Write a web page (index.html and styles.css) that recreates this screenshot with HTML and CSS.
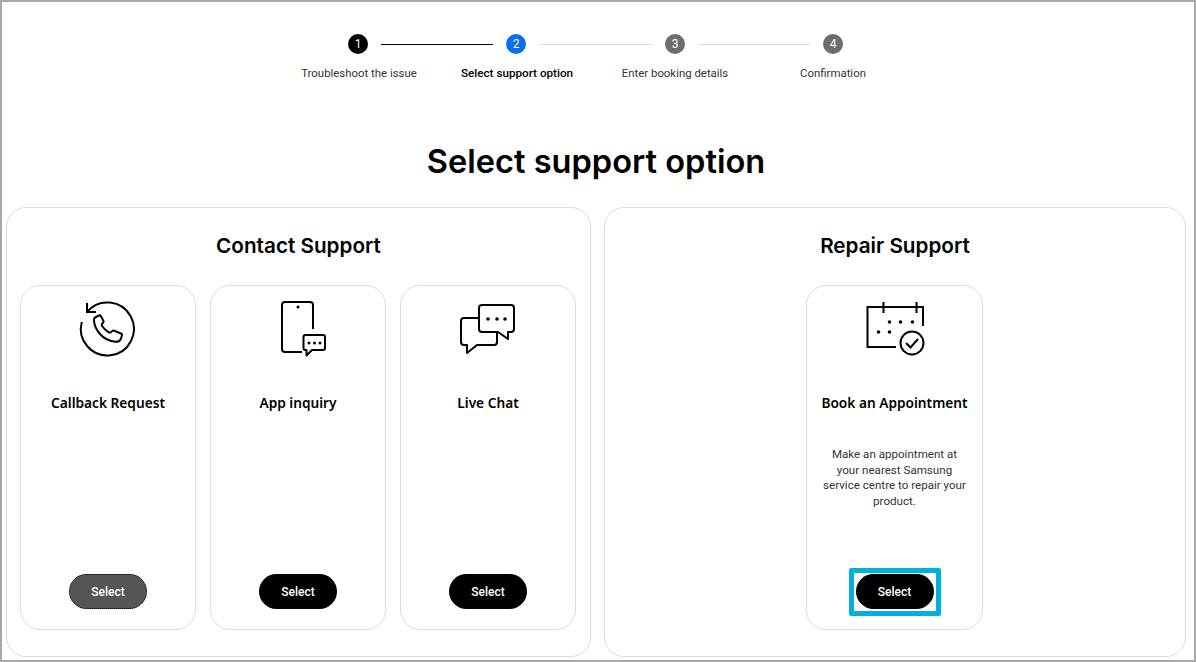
FILE: index.html
```html
<!DOCTYPE html>
<html lang="en">
<head>
    <meta charset="UTF-8">
    <meta name="viewport" content="width=device-width, initial-scale=1.0">
    <title>Select support option</title>
    <link rel="stylesheet" href="styles.css">
</head>
<body>

<div class="frame">
    <div class="stepper">
        <span class="dot done">1</span>
        <span class="line done"></span>
        <span class="dot active">2</span>
        <span class="line second"></span>
        <span class="dot">3</span>
        <span class="line"></span>
        <span class="dot">4</span>
    </div>
    <div class="step-labels">
        <span>Troubleshoot the issue</span>
        <span class="current">Select support option</span>
        <span>Enter booking details</span>
        <span>Confirmation</span>
    </div>

    <h1>Select support option</h1>

    <div class="panels">
        <section class="panel">
            <h2>Contact Support</h2>
            <div class="cards">
                <div class="card">
                    <svg class="icon" viewBox="0 0 64 64" fill="none" stroke="#000" stroke-width="2">
                        <path d="M11 15A26.500 26.500 0 1 1 5.800 25"/>
                        <path d="M11 6V15H20"/>
                        <path d="M19 20.500L23 18.500Q24.200 18 24.800 19L27.500 24Q28 25 27 25.800L26 27Q25.500 27.800 26 29Q29 33 32.500 35.200Q33.800 36 34.800 35.200L36.300 34Q37.300 33.300 38.300 33.800L45 36.500Q46.200 37 46 38.200L44.800 42Q43.500 45 39.500 44.800Q30 44 24 37Q18 30 18 23Q18 21 19 20.500Z" stroke-linejoin="round"/>
                    </svg>
                    <h3>Callback Request</h3>
                    <button class="btn focused">Select</button>
                </div>
                <div class="card">
                    <svg class="icon" viewBox="0 0 64 64" fill="none" stroke="#000" stroke-width="2">
                        <path d="M47 32V8a3 3 0 0 0-3-3H19a3 3 0 0 0-3 3v44a3 3 0 0 0 3 3H36"/>
                        <circle cx="32" cy="10" r="1.500" fill="#000" stroke="none"/>
                        <path d="M39.500 38H57a2 2 0 0 1 2 2v11a2 2 0 0 1-2 2H46l-5.500 5.500V53H39.500a2 2 0 0 1-2-2V40a2 2 0 0 1 2-2z" stroke-linejoin="round"/>
                        <circle cx="43" cy="46" r="1.500" fill="#000" stroke="none"/>
                        <circle cx="48.500" cy="46" r="1.500" fill="#000" stroke="none"/>
                        <circle cx="54" cy="46" r="1.500" fill="#000" stroke="none"/>
                    </svg>
                    <h3>App inquiry</h3>
                    <button class="btn">Select</button>
                </div>
                <div class="card">
                    <svg class="icon" viewBox="0 0 64 64" fill="none" stroke="#000" stroke-width="2">
                        <path d="M23 21H8a3 3 0 0 0-3 3v21a3 3 0 0 0 3 3H11V56L21 48H38a3 3 0 0 0 3-3V35" stroke-linejoin="round"/>
                        <path d="M26 8H55a3 3 0 0 1 3 3V32a3 3 0 0 1-3 3H52V42L42 35H26a3 3 0 0 1-3-3V11a3 3 0 0 1 3-3z" stroke-linejoin="round"/>
                        <circle cx="32" cy="22" r="1.800" fill="#000" stroke="none"/>
                        <circle cx="41" cy="22" r="1.800" fill="#000" stroke="none"/>
                        <circle cx="49" cy="22" r="1.800" fill="#000" stroke="none"/>
                    </svg>
                    <h3>Live Chat</h3>
                    <button class="btn">Select</button>
                </div>
            </div>
        </section>

        <section class="panel">
            <h2>Repair Support</h2>
            <div class="cards center">
                <div class="card wide">
                    <svg class="icon" viewBox="0 0 64 64" fill="none" stroke="#000" stroke-width="2">
                        <path d="M60 29V10H4.500V50H33"/>
                        <path d="M20.500 5V16M53.500 5V16"/>
                        <circle cx="49" cy="46" r="11.500"/>
                        <path d="M43 46L47.500 50.500L55 42"/>
                        <g fill="#000" stroke="none">
                            <circle cx="26.500" cy="25" r="1.800"/>
                            <circle cx="37.500" cy="25" r="1.800"/>
                            <circle cx="49.500" cy="25" r="1.800"/>
                            <circle cx="15.500" cy="35" r="1.800"/>
                            <circle cx="26.500" cy="35" r="1.800"/>
                        </g>
                    </svg>
                    <h3>Book an Appointment</h3>
                    <p>Make an appointment at your nearest Samsung service centre to repair your product.</p>
                    <button class="btn marked">Select</button>
                </div>
            </div>
        </section>
    </div>
</div>

</body>
</html>
```

FILE: styles.css
```css
* {
    box-sizing: border-box;
}

html, body {
    height: 100%;
}

body {
    margin: 0;
    font-family: Roboto, Arial, sans-serif;
    color: #000;
    background-color: #fff;
}

.frame {
    height: 662px;
    padding: 32px 8px 3px 4px;
    border: 2px solid #a9a9a9;
    display: flex;
    flex-direction: column;
}

.stepper {
    display: flex;
    align-items: center;
    justify-content: center;
    gap: 13px;
    padding-right: 1px;
}

.dot {
    width: 20px;
    height: 20px;
    border-radius: 50%;
    background-color: #6d6d6d;
    color: #fff;
    font-size: 12px;
    line-height: 20px;
    text-align: center;
}

.dot.done {
    background-color: #000;
}

.dot.active {
    background-color: #0a6fe8;
}

.line {
    width: 112px;
    height: 1px;
    background-color: #ddd;
}

.line.done {
    background-color: #000;
}

.line.second {
    margin-left: 1px;
}

.step-labels {
    display: flex;
    justify-content: center;
    margin-top: 11px;
    font-size: 11.400px;
    line-height: 16px;
    color: #333;
}

.step-labels span {
    width: 158px;
    text-align: center;
}

.step-labels .current {
    color: #000;
    font-size: 11.700px;
    font-weight: 500;
}

h1 {
    margin: 58px 0 0;
    font-family: Inter, Arial, sans-serif;
    font-size: 32.600px;
    line-height: 44px;
    font-weight: 600;
    text-align: center;
}

.panels {
    display: grid;
    grid-template-columns: 585px 582px;
    gap: 13px;
    margin-top: 24px;
    flex: 1;
}

.panel {
    border: 1px solid #ddd;
    border-radius: 20px;
    padding: 23px 13px 26px;
    display: flex;
    flex-direction: column;
}

h2 {
    margin: 0 0 24px;
    font-family: Inter, Arial, sans-serif;
    font-size: 20.700px;
    line-height: 30px;
    font-weight: 600;
    text-align: center;
}

.cards {
    display: flex;
    gap: 14px;
    flex: 1;
}

.cards.center {
    justify-content: center;
    padding-right: 1px;
}

.card {
    width: 176px;
    border: 1px solid #ddd;
    border-radius: 20px;
    padding: 11px 12px 20px;
    display: flex;
    flex-direction: column;
    align-items: center;
    text-align: center;
}

.card.wide {
    width: 177px;
}

.icon {
    width: 64px;
    height: 64px;
    flex-shrink: 0;
}

h3 {
    margin: 32px 0 0;
    font-family: "Noto Sans", Arial, sans-serif;
    font-size: 13.700px;
    line-height: 20px;
    font-weight: 600;
    white-space: nowrap;
}

.card p {
    margin: 34px 0 0;
    padding: 0 3px;
    font-size: 11.600px;
    line-height: 15.500px;
    color: #333;
}

.btn {
    position: relative;
    margin-top: auto;
    width: 78px;
    height: 35px;
    border: none;
    border-radius: 18px;
    background-color: #000;
    color: #fff;
    font-family: inherit;
    font-size: 12px;
    font-weight: 500;
    cursor: pointer;
}

.btn.focused {
    background-color: #555;
    border: 1px dotted #000;
}

.btn.marked::after {
    content: "";
    position: absolute;
    inset: -6px -7px -7px;
    border: 5px solid #00b0e0;
    border-radius: 2px;
}
```
